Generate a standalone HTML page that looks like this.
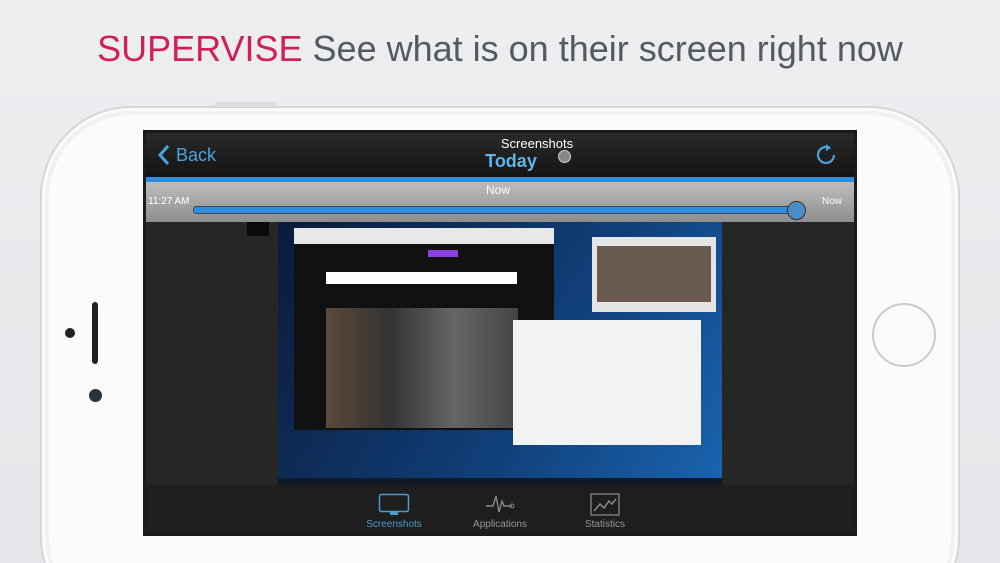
<!DOCTYPE html><html><head><style>
html,body{margin:0;width:1000px;height:563px;overflow:hidden}
body{font-family:"Liberation Sans",sans-serif}
#w{position:relative;width:1000px;height:563px;overflow:hidden;background:linear-gradient(#eceef0,#e4e6e9)}
.a{position:absolute;line-height:1}
</style></head><body><div id="w">
<svg class="a" style="left:0;top:0" width="1000" height="563"><rect x="41" y="107" width="918" height="520" rx="90" fill="#fbfbfb" stroke="#d3d5d8" stroke-width="2"/><rect x="47" y="113" width="906" height="508" rx="84" fill="none" stroke="#f0f1f2" stroke-width="4"/><rect x="215" y="102" width="62" height="5" rx="2" fill="#dcdde0"/></svg>
<div class="a" style="left:0;top:31px;width:1000px;text-align:center;font-size:36px;color:#555a60"><span style="color:#d21f5a">SUPERVISE</span> See what is on their screen right now</div>
<div class="a" style="left:92px;top:302px;width:6px;height:62px;background:#222;border-radius:3px"></div>
<div class="a" style="left:65px;top:328px;width:10px;height:10px;background:#222;border-radius:50%"></div>
<div class="a" style="left:89px;top:389px;width:13px;height:13px;background:#2a3340;border-radius:50%"></div>
<div class="a" style="left:872px;top:303px;width:60px;height:60px;border-radius:50%;border:2px solid #c8cacd;background:#fafafa"></div>
<div class="a" style="left:143px;top:130px;width:714px;height:406px;background:#1b1b1b"></div>
<div class="a" style="left:146px;top:133px;width:708px;height:44px;background:linear-gradient(#2a2a2a,#141414)"></div>
<svg class="a" style="left:156px;top:144px" width="16" height="22"><path d="M12 2L4 11l8 9" stroke="#4aa3dc" stroke-width="3" fill="none"/></svg>
<div class="a" style="left:176px;top:146px;font-size:18px;color:#4aa3dc">Back</div>
<div class="a" style="left:446px;top:137px;width:182px;text-align:center;font-size:13px;color:#fff">Screenshots</div>
<div class="a" style="left:420px;top:152px;width:182px;text-align:center;font-size:18px;color:#5fb4e8;font-weight:bold">Today</div>
<div class="a" style="left:558px;top:150px;width:11px;height:11px;border-radius:50%;background:#888;border:1px solid #ccc"></div>
<svg class="a" style="left:814px;top:142px" width="24" height="26"><path d="M16 6a8 8 0 1 0 4 7" stroke="#4aa3dc" stroke-width="2.2" fill="none"/><path d="M12 2l5 4-5 3z" fill="#4aa3dc"/></svg>
<div class="a" style="left:146px;top:177px;width:708px;height:5px;background:#2f8ee0"></div>
<div class="a" style="left:146px;top:182px;width:708px;height:40px;background:linear-gradient(#bdbdbd,#8e8e8e)"></div>
<div class="a" style="left:486px;top:184px;font-size:12px;color:#fff">Now</div>
<div class="a" style="left:148px;top:197px;font-size:10px;color:#fff">11:27 AM</div>
<div class="a" style="left:822px;top:197px;font-size:10px;color:#fff">Now</div>
<div class="a" style="left:193px;top:206px;width:606px;height:6px;border-radius:3px;background:#2f8ee0;border:1px solid #444"></div>
<div class="a" style="left:787px;top:201px;width:17px;height:17px;border-radius:50%;background:#4a8ec8;border:1px solid #333"></div>
<div class="a" style="left:146px;top:222px;width:708px;height:263px;background:#262626"></div>
<div class="a" style="left:247px;top:222px;width:22px;height:14px;background:#0a0a0a"></div>
<div class="a" style="left:278px;top:222px;width:444px;height:263px;background:linear-gradient(120deg,#0b1a3a,#10407a 60%,#1a64b0)"></div>
<div class="a" style="left:294px;top:228px;width:260px;height:202px;background:#111"></div>
<div class="a" style="left:294px;top:228px;width:260px;height:16px;background:#e8e8e8"></div>
<div class="a" style="left:326px;top:272px;width:191px;height:12px;background:#fff"></div>
<div class="a" style="left:326px;top:308px;width:192px;height:120px;background:linear-gradient(90deg,#5a4a3a,#333,#666,#444)"></div>
<div class="a" style="left:428px;top:250px;width:30px;height:7px;background:#8a3fe0"></div>
<div class="a" style="left:592px;top:237px;width:124px;height:75px;background:#e5e5e5"></div>
<div class="a" style="left:597px;top:246px;width:114px;height:56px;background:#6a5a50"></div>
<div class="a" style="left:513px;top:320px;width:188px;height:125px;background:#f2f2f2"></div>
<div class="a" style="left:278px;top:478px;width:444px;height:7px;background:#111a28"></div>
<div class="a" style="left:146px;top:485px;width:708px;height:48px;background:#1e1e1e"></div>
<svg class="a" style="left:378px;top:493px" width="32" height="24"><rect x="1.5" y="1.5" width="29" height="17" rx="2" fill="none" stroke="#4a9ccc" stroke-width="1.5"/><rect x="12" y="19" width="8" height="3" fill="#4a9ccc"/></svg>
<svg class="a" style="left:486px;top:491px" width="30" height="24"><path d="M0 15h7l3-10 3 16 3-11 2 5h8" stroke="#888" stroke-width="1.4" fill="none"/><circle cx="26" cy="15" r="2" fill="none" stroke="#888"/></svg>
<svg class="a" style="left:590px;top:493px" width="30" height="24"><rect x="1" y="1" width="28" height="21" fill="none" stroke="#888" stroke-width="1.3"/><path d="M4 18l6-7 4 4 5-7 3 3 4-5" stroke="#888" stroke-width="1.5" fill="none"/></svg>
<div class="a" style="left:354px;top:520px;width:80px;text-align:center;font-size:10px;color:#4a9ccc">Screenshots</div>
<div class="a" style="left:460px;top:520px;width:80px;text-align:center;font-size:10px;color:#999">Applications</div>
<div class="a" style="left:565px;top:520px;width:80px;text-align:center;font-size:10px;color:#999">Statistics</div>
</div></body></html>
